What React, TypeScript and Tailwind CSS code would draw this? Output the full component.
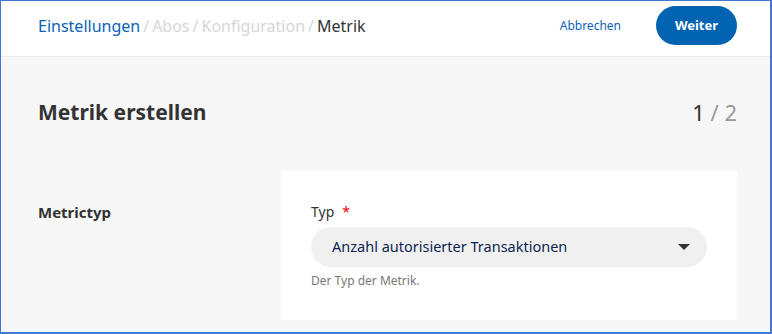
export default function App() {
  return (
    <div className="h-[334px] w-[772px] overflow-hidden border-t border-l border-r-2 border-b-2 border-[#4178d0] bg-[#f7f7f7] font-['Noto_Sans',sans-serif]">
      <header className="flex h-[56px] items-start justify-between border-b border-[#ebebeb] bg-white pt-[5px] pl-[37px] pr-[33px]">
        <nav className="flex h-[39px] items-center gap-[3px] text-[16px] leading-none">
          <span className="text-[#0b63b6]">Einstellungen</span>
          <span className="text-[#d6d6d6]">/</span>
          <span className="text-[#d6d6d6]">Abos</span>
          <span className="text-[#d6d6d6]">/</span>
          <span className="text-[#d6d6d6]">Konfiguration</span>
          <span className="text-[#d6d6d6]">/</span>
          <span className="text-[#333]">Metrik</span>
        </nav>
        <div className="flex items-center gap-[35px]">
          <button className="text-[12px] text-[#0b63b6]">Abbrechen</button>
          <button className="h-[39px] w-[81px] rounded-full bg-[#0263b3] text-[13px] font-bold text-white">
            Weiter
          </button>
        </div>
      </header>

      <main className="pl-[37px] pr-[33px] pt-[44px]">
        <div className="flex items-center justify-between">
          <h1 className="text-[21px] font-bold leading-none text-[#333]">Metrik erstellen</h1>
          <div className="text-[22px] leading-none">
            <span className="text-[#333]">1</span>
            <span className="text-[#999]"> / 2</span>
          </div>
        </div>

        <section className="mt-[48px] flex">
          <h2 className="w-[243px] shrink-0 pt-[30px] text-[15px] font-bold text-[#333]">Metrictyp</h2>
          <div className="h-[149px] flex-1 bg-white px-[30px] pt-[30px]">
            <label className="flex items-center gap-[8px] text-[14px] text-[#333]">
              Typ <span className="text-[#e00]">*</span>
            </label>
            <button className="mt-[5px] flex h-[40px] w-[396px] items-center justify-between rounded-full bg-[#f0f0f0] pl-[21px] pr-[17px] text-[14.5px] text-[#0d2650]">
              Anzahl autorisierter Transaktionen
              <svg width="12" height="6" viewBox="0 0 12 6">
                <path d="M0 0h12L6 6z" fill="#333" />
              </svg>
            </button>
            <p className="mt-[5px] text-[12px] text-[#777]">Der Typ der Metrik.</p>
          </div>
        </section>
      </main>
    </div>
  );
}
